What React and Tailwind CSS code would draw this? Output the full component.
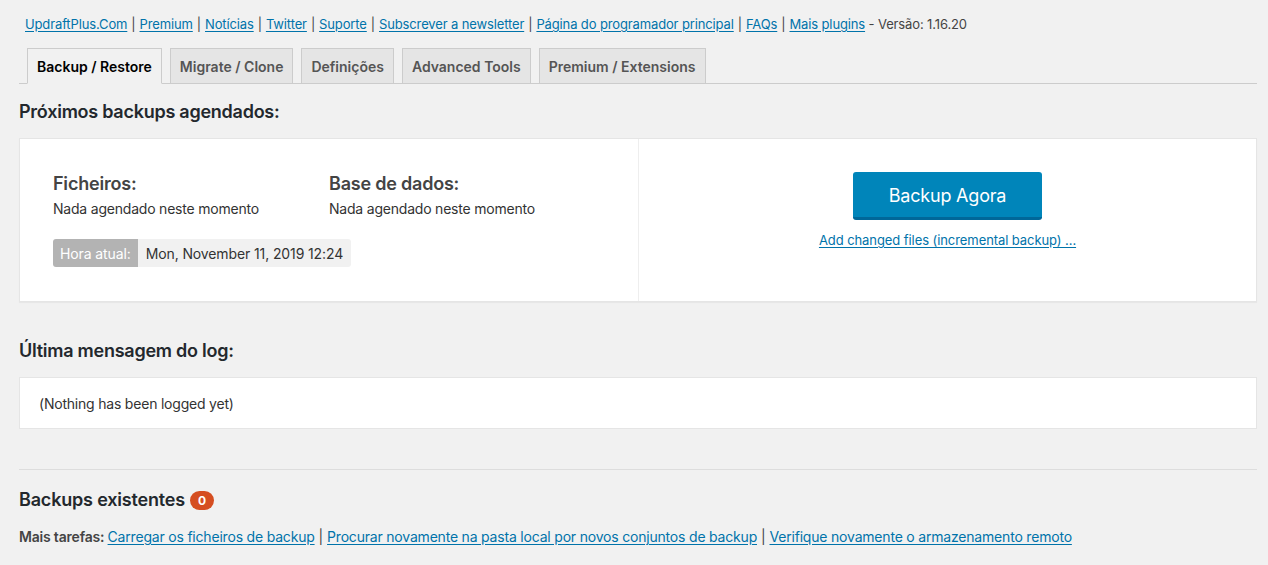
import React from 'react'

const topLinks = [
    'UpdraftPlus.Com',
    'Premium',
    'Notícias',
    'Twitter',
    'Suporte',
    'Subscrever a newsletter',
    'Página do programador principal',
    'FAQs',
    'Mais plugins',
]

const tabs = ['Backup / Restore', 'Migrate / Clone', 'Definições', 'Advanced Tools', 'Premium / Extensions']

const tasks = [
    'Carregar os ficheiros de backup',
    'Procurar novamente na pasta local por novos conjuntos de backup',
    'Verifique novamente o armazenamento remoto',
]

function Link({ children }) {
    return <a href="#" className="text-[#0073aa] underline underline-offset-2">{children}</a>
}

export default function App() {
    return (
        <div className="min-h-[565px] bg-[#f1f1f1] text-[#23282d] font-['Inter','Liberation_Sans',sans-serif] text-[13px] tracking-[-0.016em]">
            <div className="pl-[19px] pr-[11px] pt-[14px]">
                {/* links de topo */}
                <p className="pl-[6px] leading-[20px] text-[#444] tracking-[-0.01em]">
                    {topLinks.map((l, i) => (
                        <span key={l}>
                            {i > 0 && <span className="px-[4px]">|</span>}
                            <Link>{l}</Link>
                        </span>
                    ))}
                    <span> - Versão: 1.16.20</span>
                </p>

                {/* tabs */}
                <div className="mt-[14px] flex gap-[8px] border-b border-[#ccc] pl-[8px] tracking-normal">
                    {tabs.map((t, i) => (
                        <div
                            key={t}
                            className={`-mb-px h-[36px] flex items-center px-[9px] border text-[14px] font-semibold ${i === 0
                                ? 'bg-[#f1f1f1] border-[#ccc] border-b-[#f1f1f1] text-black'
                                : 'bg-[#e5e5e5] border-[#ccc] text-[#555]'
                                }`}
                        >
                            {t}
                        </div>
                    ))}
                </div>

                <h2 className="mt-[16px] text-[18px] font-semibold leading-[24px] tracking-[-0.014em]">Próximos backups agendados:</h2>

                <div className="mt-[14px] flex h-[164px] bg-white border border-[#e5e5e5] shadow-[0_1px_1px_rgba(0,0,0,0.04)]">
                    <div className="w-[619px] border-r border-[#eee] pl-[33px] pt-[33px]">
                        <div className="flex">
                            <div className="w-[276px]">
                                <h3 className="text-[18px] font-semibold text-[#444] leading-[24px]">Ficheiros:</h3>
                                <p className="mt-[3px] text-[14px] text-[#333] leading-[20px]">Nada agendado neste momento</p>
                            </div>
                            <div>
                                <h3 className="text-[18px] font-semibold text-[#444] leading-[24px]">Base de dados:</h3>
                                <p className="mt-[3px] text-[14px] text-[#333] leading-[20px]">Nada agendado neste momento</p>
                            </div>
                        </div>
                        <div className="mt-[20px] inline-flex h-[28px] text-[14px] rounded-[3px] overflow-hidden tracking-[-0.008em]">
                            <span className="flex items-center px-[7px] bg-[#b3b3b3] text-white">Hora atual:</span>
                            <span className="flex items-center px-[8px] bg-[#f1f1f1] text-[#333]">Mon, November 11, 2019 12:24</span>
                        </div>
                    </div>
                    <div className="flex-1 flex flex-col items-center pt-[33px]">
                        <button className="w-[189px] h-[48px] rounded-[3px] bg-[#0085ba] border-b-[3px] border-[#006799] text-white text-[18px] leading-none pt-[2px]">
                            Backup Agora
                        </button>
                        <a href="#" className="mt-[11px] text-[13px] text-[#0073aa] underline underline-offset-2 tracking-[-0.006em]">
                            Add changed files (incremental backup) ...
                        </a>
                    </div>
                </div>

                <h2 className="mt-[37px] text-[18px] font-semibold leading-[24px] tracking-[-0.014em]">Última mensagem do log:</h2>

                <div className="mt-[14px] h-[52px] flex items-center pl-[19px] bg-white border border-[#e5e5e5] text-[14px] text-[#333]">
                    (Nothing has been logged yet)
                </div>

                <hr className="mt-[40px] border-t border-[#ddd]" />

                <h2 className="mt-[18px] flex items-center gap-[5px] text-[18px] font-semibold leading-[24px] tracking-[-0.01em]">
                    Backups existentes
                    <span className="h-[19px] px-[8px] rounded-[10px] bg-[#d54e21] text-white text-[12px] font-bold leading-[19px]">0</span>
                </h2>

                <p className="mt-[15px] text-[14px] text-[#444] leading-[20px] tracking-[-0.014em]">
                    <span className="font-semibold">Mais tarefas: </span>
                    {tasks.map((t, i) => (
                        <span key={t}>
                            {i > 0 && <span className="px-[4px]">|</span>}
                            <Link>{t}</Link>
                        </span>
                    ))}
                </p>
            </div>
        </div>
    )
}
